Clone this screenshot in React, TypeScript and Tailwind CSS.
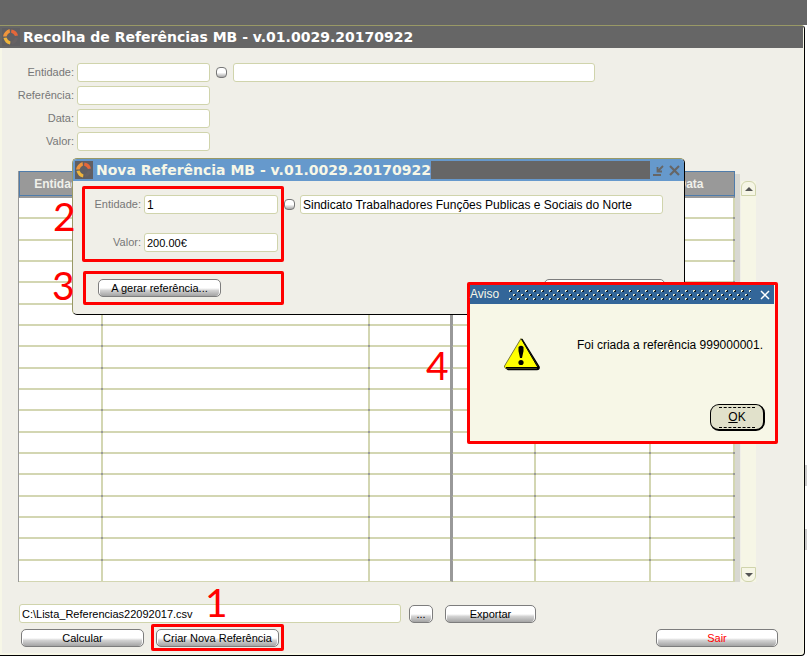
import React from "react";

const field =
  "rounded-[3px] border border-[#d0d4ac] bg-white px-[2px] text-black outline-none";
const glossy =
  "h-[18px] shrink-0 rounded-[5px] border border-[#7d7d7d] bg-linear-to-b from-white from-50% via-[#d2d2d2] via-65% to-[#a4a4a4] text-[11px] leading-[16px] text-black shadow-[inset_1px_1px_0_#fff,inset_-1px_0_0_#fff]";

function Logo() {
  return (
    <svg viewBox="0 0 18 18" className="h-[18px] w-[18px] shrink-0 bg-[#605f62]" aria-hidden="true">
      <path d="M1 8.500Q2 3 7.500 1L8 4.500Q5.500 5.500 4.500 8.500Z" fill="#f0953c" />
      <path d="M9.500 1.500Q15 2.500 16 7.500L13 8Q12 5.500 9 4.500Z" fill="#e4673a" />
      <path d="M1.500 10L4.500 9.500Q5.500 12.500 8.500 13.500L8 16.500Q3 15.500 1.500 10Z" fill="#efb53c" />
      <path d="M16 10L13 9.500Q12 12.500 9.500 13.500L10 16.500Q15 15 16 10Z" fill="#676264" />
    </svg>
  );
}

function ListButton() {
  return (
    <button
      type="button"
      className="h-[11px] w-[11px] shrink-0 rounded-[4px] border border-[#777] bg-linear-to-b from-white from-50% to-[#a8a8a8]"
    />
  );
}

function FormRow({ id, label, children }: { id: string; label: string; children?: React.ReactNode }) {
  return (
    <div className="flex items-center">
      <label htmlFor={id} className="w-[71px] text-right text-[11px] leading-[19px] text-[#777]">
        {label}
      </label>
      <input id={id} className={`${field} ml-[3px] h-[19px] w-[133px] text-[12px]`} />
      {children}
    </div>
  );
}

const headers = ["Entidade", "", "", "", "", "Data"];
const rows = Array.from({ length: 18 }, (_, i) => i);

function References() {
  return (
    <table className="min-w-0 flex-1 table-fixed border-separate border-spacing-0 border-l border-[#999]">
      <colgroup>
        <col className="w-[84px]" />
        <col />
        <col className="w-[83px]" />
        <col className="w-[83px]" />
        <col className="w-[115px]" />
        <col className="w-[84px]" />
      </colgroup>
      <thead>
        <tr>
          {headers.map((h, i) => (
            <th
              key={i}
              className="h-[27px] border-b-2 border-[#999] bg-[#999] p-0 pr-[4px] text-[12px] leading-[20px] font-bold text-[#f0f0ea] shadow-[inset_0_1px_0_#4f7cab,inset_0_-1px_0_#4f7cab] first:border-l first:border-l-[#4f7cab] last:border-r last:border-r-[#4f7cab]"
            >
              {h}
            </th>
          ))}
        </tr>
      </thead>
      <tbody>
        {rows.map((r) => (
          <tr key={r} className="group h-[21px] nth-[3n+2]:h-[22px]">
            {headers.map((_, c) => (
              <td
                key={c}
                className="relative border-r-2 border-b-2 border-[#d3d6b2] bg-white p-0 group-last:border-b after:absolute after:-right-[2px] after:-bottom-[2px] after:h-[2px] after:w-[2px] after:bg-[#999] group-last:after:hidden nth-3:border-r-[3px] nth-3:border-r-[#999]"
              />
            ))}
          </tr>
        ))}
      </tbody>
    </table>
  );
}

function ScrollBar() {
  return (
    <div className="mt-[10px] flex w-[15px] flex-col bg-[#f6f6e6]">
      <button type="button" className="flex h-[15px] items-center justify-center rounded-t-[6px] border border-[#d0d4ac]">
        <svg viewBox="0 0 8 4" className="h-[4px] w-[8px]"><path d="M0 4L4 0L8 4Z" fill="#555" /></svg>
      </button>
      <div className="flex-1" />
      <button type="button" className="flex h-[15px] items-center justify-center rounded-b-[6px] border border-[#d0d4ac]">
        <svg viewBox="0 0 8 4" className="h-[4px] w-[8px]"><path d="M0 0L4 4L8 0Z" fill="#555" /></svg>
      </button>
    </div>
  );
}

function NewReference() {
  return (
    <section className="absolute top-[158px] left-[72px] flex h-[157px] w-[613px] flex-col rounded-[5px] border border-t-[#999966] border-r-black border-b-black border-l-[#999966] bg-[#f0efe8]">
      <header className="flex h-[22px] items-center rounded-t-[4px] bg-[#6699cc] pl-[2px]">
        <Logo />
        <h2 className="pl-[3px] font-['DejaVu_Sans'] text-[14px] leading-[22px] font-bold whitespace-nowrap text-[#f7f7e7]">
          Nova Referência MB - v.01.0029.20170922
        </h2>
        <div className="h-[18px] flex-1 bg-[#666]" />
        <button type="button" className="ml-[3px] flex h-[18px] w-[11px] items-center">
          <svg viewBox="0 0 11 11" className="h-[11px] w-[11px]" fill="none" stroke="#666" strokeWidth="1.8">
            <path d="M0 10H8M10 1L5 6M4.500 2V6.500H9" />
          </svg>
        </button>
        <button type="button" className="mr-[4px] ml-[5px] flex h-[18px] w-[11px] items-center">
          <svg viewBox="0 0 11 11" className="h-[11px] w-[11px]" fill="none" stroke="#666" strokeWidth="2.2">
            <path d="M1 1L10 10M10 1L1 10" />
          </svg>
        </button>
      </header>
      <div className="mt-[5px] ml-[9px] flex items-start">
        <div className="flex h-[76px] w-[202px] flex-col gap-[19px] rounded-[2px] border-[3px] border-[#ff0000] pt-[6px]">
          <div className="flex items-center">
            <label htmlFor="ne" className="w-[56px] text-right text-[11px] text-[#777]">Entidade:</label>
            <input id="ne" defaultValue="1" className={`${field} ml-[3px] h-[19px] w-[134px] text-[12px]`} />
          </div>
          <div className="flex items-center">
            <label htmlFor="nv" className="w-[56px] text-right text-[11px] text-[#777]">Valor:</label>
            <input id="nv" defaultValue="200.00€" className={`${field} ml-[3px] h-[19px] w-[134px] text-[11px]`} />
          </div>
        </div>
        <div className="mt-[9px] flex flex-1 items-center gap-[5px] pr-[21px]">
          <ListButton />
          <input
            aria-label="Entidade"
            defaultValue="Sindicato Trabalhadores Funções Publicas e Sociais do Norte"
            className={`${field} h-[19px] min-w-0 flex-1 text-[12px]`}
          />
        </div>
      </div>
      <div className="mt-[9px] ml-[10px] flex items-start justify-between pr-[19px]">
        <div className="h-[34px] w-[201px] rounded-[2px] border-[3px] border-[#ff0000] pt-[5px] pl-[12px]">
          <button type="button" className={`${glossy} block w-[123px]`}>A gerar referência...</button>
        </div>
        <button type="button" className={`${glossy} mt-[8px] w-[121px]`} />
      </div>
    </section>
  );
}

function Notice() {
  return (
    <section role="alertdialog" className="absolute top-[282px] left-[467px] flex h-[162px] w-[311px] flex-col rounded-[2px] border-[3px] border-[#ff0000] bg-[#f7f7e7]">
      <header className="mr-[1px] flex h-[19px] items-center bg-[#336699]">
        <h2 className="w-[38px] text-[12px] leading-[19px] text-[#f7f7e7]">Aviso</h2>
        <svg className="h-[11px] flex-1" aria-hidden="true">
          <defs>
            <pattern id="grip" width="8" height="12" patternUnits="userSpaceOnUse">
              <path d="M1 1h2v1h-1v1h-1zM5 5h2v1h-1v1h-1zM1 9h2v1h-1v1h-1z" fill="#e6ebd6" />
              <path d="M2 2h1v-1h1v2h-2zM6 6h1v-1h1v2h-2zM2 10h1v-1h1v2h-2z" fill="#0a1a28" />
            </pattern>
          </defs>
          <rect width="100%" height="12" fill="url(#grip)" />
        </svg>
        <button type="button" className="mr-[4px] ml-[9px] flex h-[19px] w-[10px] items-center">
          <svg viewBox="0 0 10 10" className="h-[10px] w-[10px]" fill="none" stroke="#fff" strokeWidth="1.5">
            <path d="M1 1L9 9M9 1L1 9" />
          </svg>
        </button>
      </header>
      <div className="flex items-start justify-between pt-[33px] pr-[12px] pl-[33px]">
        <svg viewBox="0 0 38 34" className="h-[34px] w-[38px]" aria-hidden="true">
          <path d="M19 2.500L36 30Q36.500 32.500 34 32.500H5L3 31Z" fill="#000" stroke="#000" strokeWidth="1.500" strokeLinejoin="round" />
          <path d="M18 1.500L34.500 29.500Q34.500 31 33.500 31H2.500Q1 30.500 1.500 29Z" fill="#ffff00" stroke="#77773a" strokeLinejoin="round" />
          <path d="M18.500 2L35 30.500H3" fill="none" stroke="#000" />
          <path d="M15.500 10Q18 7.500 20.500 10V14L19 21H17L15.500 14Z" fill="#000" />
          <circle cx="18" cy="25.500" r="2.600" fill="#000" />
        </svg>
        <p className="pt-[1px] text-[12px] leading-[15px] whitespace-nowrap text-black">Foi criada a referência 999000001.</p>
      </div>
      <div className="mt-auto flex justify-end pr-[10px] pb-[10px]">
        <button
          type="button"
          className="flex h-[27px] w-[55px] items-center justify-center rounded-[9px] border border-r-2 border-b-2 border-black bg-[#e1e1cb] text-[12px] text-black"
        >
          <span className="flex h-[21px] w-[36px] items-center justify-center border-y border-dashed border-black">
            <span><u>O</u>K</span>
          </span>
        </button>
      </div>
    </section>
  );
}

export default function App() {
  return (
    <div className="relative min-h-screen bg-white font-['Liberation_Sans',Arial,sans-serif]">
      <div className="h-[25px] bg-[#666]" />
      <div className="flex">
        <main className="min-w-0 flex-1 rounded-r-[4px] border-t border-r border-b border-t-[#999966] border-r-black border-b-black bg-[#f0efe8] pb-[4px] shadow-[inset_2px_0_0_#f7f7e7,inset_-1px_-2px_0_#f7f7e7]">
          <header className="mr-[1px] flex h-[22px] items-center bg-[#666] pl-[2px]">
            <Logo />
            <h1 className="pl-[3px] font-['DejaVu_Sans'] text-[14px] leading-[22px] font-bold whitespace-nowrap text-white">
              Recolha de Referências MB - v.01.0029.20170922
            </h1>
          </header>

          <form className="flex flex-col gap-[4px] pt-[15px] pl-[3px]">
            <FormRow id="entidade" label="Entidade:">
              <div className="ml-[6px] flex flex-1 items-center gap-[6px] pr-[209px]">
                <ListButton />
                <input aria-label="Entidade" className={`${field} h-[19px] min-w-0 flex-1 text-[12px]`} />
              </div>
            </FormRow>
            <FormRow id="referencia" label="Referência:" />
            <FormRow id="data" label="Data:" />
            <FormRow id="valor" label="Valor:" />
          </form>

          <div className="mt-[20px] flex pr-[48px] pl-[18px]">
            <References />
            <div className="mt-[3px] mr-[1px] w-[5px] bg-[#d8d8d2]" />
            <ScrollBar />
          </div>

          <div className="mt-[22px] flex items-center pl-[19px]">
            <input
              aria-label="C:\Lista_Referencias22092017.csv"
              defaultValue="C:\Lista_Referencias22092017.csv"
              className={`${field} h-[19px] w-[382px] text-[11px]`}
            />
            <button type="button" className={`${glossy} ml-[8px] w-[24px]`}>...</button>
            <button type="button" className={`${glossy} ml-[12px] w-[91px]`}>Exportar</button>
          </div>
          <div className="mt-[1px] flex items-center pr-[26px] pl-[21px]">
            <button type="button" className={`${glossy} w-[123px]`}>Calcular</button>
            <div className="ml-[7px] flex h-[27px] w-[133px] items-center justify-center rounded-[2px] border-[3px] border-[#ff0000]">
              <button type="button" className={`${glossy} w-[123px]`}>Criar Nova Referência</button>
            </div>
            <button type="button" className={`${glossy} ml-auto w-[122px]`}>
              <span className="text-[#ff0000]">Sair</span>
            </button>
          </div>
        </main>
        <div className="w-[2px]">
          <div className="mt-[440px] h-[21px] bg-[#ccc]" />
          <div className="mt-[43px] h-[21px] bg-[#ccc]" />
        </div>
      </div>

      <NewReference />
      <Notice />

      <span className="absolute top-[192px] left-[53px] font-[Lato] text-[39px] leading-[48px] text-[#ff0000]">2</span>
      <span className="absolute top-[261px] left-[52px] font-[Lato] text-[39px] leading-[48px] text-[#ff0000]">3</span>
      <span className="absolute top-[341px] left-[426px] font-[Lato] text-[39px] leading-[48px] text-[#ff0000]">4</span>
      <span className="absolute top-[578px] left-[205px] font-[Lato] text-[39px] leading-[48px] text-[#ff0000]">1</span>
    </div>
  );
}
